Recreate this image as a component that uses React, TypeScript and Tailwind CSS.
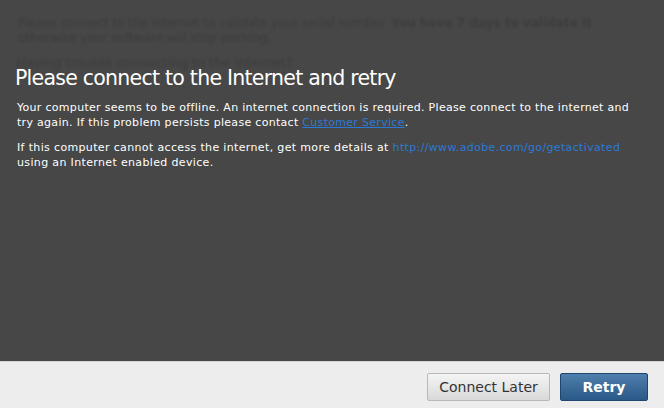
import React from "react";

export default function App() {
  return (
    <div className="w-[664px] h-[408px] flex flex-col bg-[#474747] font-['DejaVu_Sans',sans-serif] overflow-hidden">
      {/* dimmed page behind the sheet */}
      <div className="relative flex-1">
        <div className="absolute left-[18px] top-[16px] text-[12px] leading-[15px] text-[#3d3d3d] blur-[1.2px] select-none">
          <div>
            Please connect to the internet to validate your serial number.{" "}
            <b>You have 7 days to validate it</b>
          </div>
          <div>otherwise your software will stop working.</div>
          <div className="mt-[9px] -ml-[2px] text-[13px]">Having trouble connecting to the internet?</div>
        </div>

        <div className="relative pt-[65px] pl-[15px] pr-[10px]">
          <h1 className="text-[20.5px] leading-[26px] tracking-[-0.75px] text-white">
            Please connect to the Internet and retry
          </h1>
          <p className="mt-[10px] pl-[2px] text-[11px] leading-[14.5px] tracking-[0.3px] text-white">
            Your computer seems to be offline. An internet connection is required. Please connect to the internet and
            <br />
            try again. If this problem persists please contact{" "}
            <a className="text-[#2a7ad6] underline">Customer Service</a>.
          </p>
          <p className="mt-[11px] pl-[2px] text-[11px] leading-[14.5px] tracking-[0.35px] text-white">
            If this computer cannot access the internet, get more details at{" "}
            <a className="text-[#2a7ad6]">http://www.adobe.com/go/getactivated</a>
            <br />
            using an Internet enabled device.
          </p>
        </div>
      </div>

      {/* footer */}
      <div className="h-[47px] shrink-0 bg-[#ededed] border-t border-[#d6d6d6] flex items-start justify-end gap-[10px] pt-[11px] pr-[16px]">
        <button className="w-[123px] h-[28px] rounded-[2px] border border-[#b8b8b8] bg-gradient-to-b from-[#f4f4f4] to-[#d9d9d9] text-[14px] text-[#333]">
          Connect Later
        </button>
        <button className="w-[88px] h-[28px] rounded-[2px] border border-[#1e4670] bg-gradient-to-b from-[#4f7fad] to-[#2b5987] text-[14px] font-bold text-white">
          Retry
        </button>
      </div>
    </div>
  );
}
